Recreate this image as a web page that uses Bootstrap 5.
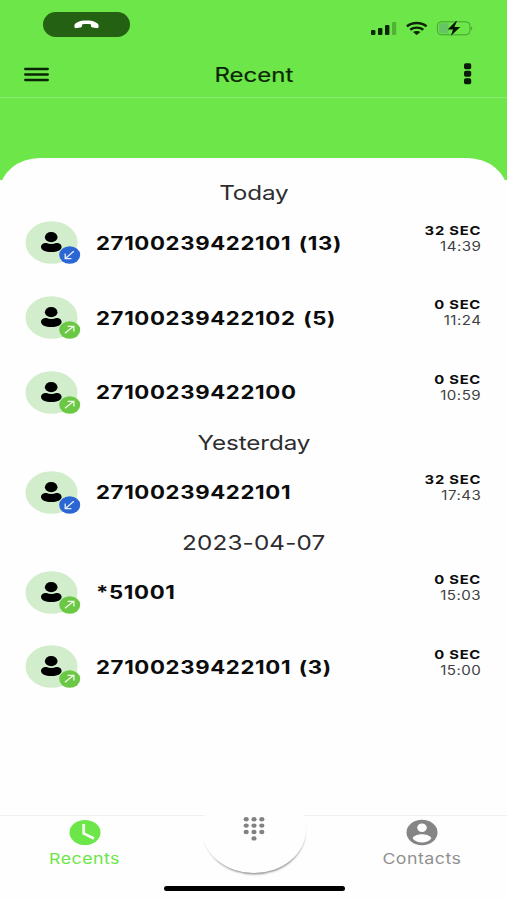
<!DOCTYPE html>
<html lang="en">
<head>
<meta charset="utf-8">
<meta name="viewport" content="width=device-width, initial-scale=1">
<title>Recent</title>
<link href="https://cdn.jsdelivr.net/npm/bootstrap@5.3.0/dist/css/bootstrap.min.css" rel="stylesheet">
<style>
  body { font-family: Inter, "Liberation Sans", sans-serif; background: #fefefe; color: #0c0c0c; line-height: 1; }
  .screen { height: 900px; }
  .hero { height: 180px; background: #6ce648; }
  .statusbar { height: 51px; padding: 12px 34px 0 43px; }
  .call-pill { width: 87px; height: 25px; background: #246113; }
  .status-icons { padding-top: 9px; }
  .titlebar { height: 47px; padding: 0 24px; border-bottom: 1px solid #86ea70; display: grid; grid-template-columns: 1fr auto 1fr; }
  .wide { display: inline-block; transform: scaleX(1.2); white-space: nowrap; }
  .from-start { transform-origin: left center; }
  .from-end { transform-origin: right center; }
  .page-title { font-size: 20px; color: #0b2604; padding-top: 2px; -webkit-text-stroke: .2px; }
  .panel { margin-top: -22px; background: #fefefe; border-radius: 40px 40px 0 0 / 33px 33px 0 0; }
  .day { height: 57px; font-size: 20.2px; letter-spacing: -.1px; color: #2d2d2f; padding-top: 2px; }
  .day.first { height: 63.2px; padding-top: 8px; }
  .day.date { letter-spacing: .15px; }
  .call { height: 43px; padding: 0 26px 0 25px; }
  .call + .call { margin-top: 31.7px; }
  .avatar { width: 56px; height: 43px; margin-right: 15px; }
  .number { font-size: 18.5px; font-weight: 700; letter-spacing: .53px; word-spacing: 1.5px; padding-top: 1px; }
  .meta { padding-top: 2.5px; }
  .secs { font-size: 12.3px; font-weight: 700; letter-spacing: .65px; height: 15px; line-height: 13px; }
  .clock { font-size: 12.6px; letter-spacing: .4px; color: #3f3f41; height: 15px; line-height: 15px; }
  .tabs { height: 85px; border-top: 1px solid #f0f0f0; }
  .tab { width: 170px; padding-top: 3px; color: #909090; font-size: 14.8px; letter-spacing: .4px; }
  .tab-label { margin-top: 5.5px; }
  .tab.on { color: #6ce648; }
  .dial { width: 104px; height: 87px; margin-top: -30px; padding-bottom: 4px; border-radius: 50%; background: #fefefe; box-shadow: .5px 3px 2px -1.5px #999; }
  .dial-cell { width: 167px; }
  .home-bar { width: 181px; height: 5px; background: #000; left: 164px; bottom: 9px; }
</style>
<script src="https://cdn.jsdelivr.net/npm/bootstrap@5.3.0/dist/js/bootstrap.bundle.min.js"></script>
</head>
<body>
<svg width="0" height="0" class="position-absolute" aria-hidden="true">
  <defs>
    <g id="person">
      <ellipse cx="26.5" cy="21.5" rx="26" ry="21.3" fill="#d1edcb"/>
      <ellipse cx="26.2" cy="16.2" rx="6.3" ry="5.1" fill="#000"/>
      <path d="M16 25.9C16 22.8 19.6 21.6 21.6 22C24.3 23.2 28.4 23.2 31.1 22C33.2 21.6 36.6 22.8 36.6 25.9C36.6 29 32.1 31 26.3 31S16 29 16 25.9Z" fill="#000"/>
    </g>
    <g id="incoming">
      <use href="#person"/>
      <ellipse cx="44.7" cy="34" rx="10.5" ry="8.7" fill="#2b66d3"/>
      <path d="M48.8 30.2L40.4 37.4M40.2 32.4V37.6H46.4" fill="none" stroke="#e8effb" stroke-width="1.3"/>
    </g>
    <g id="outgoing">
      <use href="#person"/>
      <ellipse cx="44.7" cy="34" rx="10.5" ry="8.7" fill="#6bc844"/>
      <path d="M39.9 37.3L48.6 30.3M42.6 30.4H48.9V35.4" fill="none" stroke="#f1faed" stroke-width="1.3"/>
    </g>
  </defs>
</svg>

<div class="screen position-relative d-flex flex-column overflow-hidden">
  <header class="hero flex-shrink-0">
    <div class="statusbar d-flex justify-content-between align-items-start">
      <div class="call-pill rounded-pill d-flex align-items-center justify-content-center">
        <svg width="25" height="9" viewBox="0 0 25 9"><path d="M.4 5.6C.4 2.4 6 .4 12.5 .4S24.6 2.4 24.6 5.6V6.6C24.6 8 23.6 8.3 22.4 8.1L18.6 7.4C17.5 7.2 17 6.8 17 5.9V4.5C14.4 3.9 10.6 3.9 8 4.5V5.9C8 6.8 7.5 7.2 6.4 7.4L2.6 8.1C1.4 8.3 .4 8 .4 6.6Z" fill="#fff"/></svg>
      </div>
      <div class="status-icons d-flex">
        <svg width="103" height="16" viewBox="370 21 103 16">
          <g fill="#0b2604">
            <rect x="371" y="30" width="4.4" height="5" rx="1"/><rect x="378" y="28" width="4.4" height="7" rx="1"/><rect x="385" y="25" width="4.4" height="10" rx="1"/>
            <rect x="392" y="22" width="4.2" height="13" rx="1" opacity=".27"/>
            <path d="M416.7 34.9L413 32C415.1 30.5 418.4 30.5 420.5 32Z"/>
          </g>
          <g fill="none" stroke="#0b2604" stroke-width="2.4">
            <path d="M406.9 26.4C412.3 21.8 421.2 21.8 426.6 26.4"/><path d="M410.2 29.8C413.8 26.9 419.7 26.9 423.3 29.8"/>
          </g>
          <rect x="437.4" y="21.8" width="32.6" height="13" rx="4" fill="none" stroke="#45a32e" stroke-width="1"/>
          <path d="M439 26q0-2.8 2.8-2.8H448.5V33.4H441.8Q439 33.4 439 30.6Z" fill="#65c562"/>
          <path d="M471 26.4q2.3 1.9 0 3.8Z" fill="#45a32e"/>
          <path d="M456 21L447.6 29.4H453L450.8 36L460.2 27H454.4L457 21Z" fill="#061502" stroke="#6ce648" stroke-width=".8" paint-order="stroke"/>
        </svg>
      </div>
    </div>
    <div class="titlebar align-items-center">
      <svg width="25" height="15" viewBox="0 0 25 15"><path d="M1.2 2H23.8M1.2 7.5H23.8M1.2 13H23.8" stroke="#0b2604" stroke-width="2.3" stroke-linecap="round"/></svg>
      <span class="wide page-title">Recent</span>
      <svg class="ms-auto me-2" width="15" height="22" viewBox="0 0 15 22"><g fill="#0a1a05"><rect x="4" y=".2" width="7.2" height="6" rx="1.8"/><rect x="4" y="7.7" width="7.2" height="6" rx="1.8"/><rect x="4" y="15.2" width="7.2" height="6" rx="1.8"/></g></svg>
    </div>
  </header>

  <main class="panel flex-grow-1">
    <div class="day first d-flex align-items-center justify-content-center"><span class="wide">Today</span></div>
    <div class="call d-flex align-items-center">
      <svg class="avatar" viewBox="0 0 56 43"><use href="#incoming"/></svg>
      <span class="wide from-start number">27100239422101 (13)</span>
      <div class="meta ms-auto align-self-start d-flex flex-column align-items-end"><span class="wide from-end secs">32 SEC</span><span class="wide from-end clock">14:39</span></div>
    </div>
    <div class="call d-flex align-items-center">
      <svg class="avatar" viewBox="0 0 56 43"><use href="#outgoing"/></svg>
      <span class="wide from-start number">27100239422102 (5)</span>
      <div class="meta ms-auto align-self-start d-flex flex-column align-items-end"><span class="wide from-end secs">0 SEC</span><span class="wide from-end clock">11:24</span></div>
    </div>
    <div class="call d-flex align-items-center">
      <svg class="avatar" viewBox="0 0 56 43"><use href="#outgoing"/></svg>
      <span class="wide from-start number">27100239422100</span>
      <div class="meta ms-auto align-self-start d-flex flex-column align-items-end"><span class="wide from-end secs">0 SEC</span><span class="wide from-end clock">10:59</span></div>
    </div>
    <div class="day d-flex align-items-center justify-content-center"><span class="wide">Yesterday</span></div>
    <div class="call d-flex align-items-center">
      <svg class="avatar" viewBox="0 0 56 43"><use href="#incoming"/></svg>
      <span class="wide from-start number">27100239422101</span>
      <div class="meta ms-auto align-self-start d-flex flex-column align-items-end"><span class="wide from-end secs">32 SEC</span><span class="wide from-end clock">17:43</span></div>
    </div>
    <div class="day date d-flex align-items-center justify-content-center"><span class="wide">2023-04-07</span></div>
    <div class="call d-flex align-items-center">
      <svg class="avatar" viewBox="0 0 56 43"><use href="#outgoing"/></svg>
      <span class="wide from-start number">*51001</span>
      <div class="meta ms-auto align-self-start d-flex flex-column align-items-end"><span class="wide from-end secs">0 SEC</span><span class="wide from-end clock">15:03</span></div>
    </div>
    <div class="call d-flex align-items-center">
      <svg class="avatar" viewBox="0 0 56 43"><use href="#outgoing"/></svg>
      <span class="wide from-start number">27100239422101 (3)</span>
      <div class="meta ms-auto align-self-start d-flex flex-column align-items-end"><span class="wide from-end secs">0 SEC</span><span class="wide from-end clock">15:00</span></div>
    </div>
  </main>

  <nav class="tabs flex-shrink-0 d-flex justify-content-between align-items-start">
    <div class="tab on d-flex flex-column align-items-center">
      <svg width="32" height="27" viewBox="0 0 32 27"><ellipse cx="16" cy="13.5" rx="15.5" ry="12.6" fill="#6ce648"/><path d="M14.7 5V14.4L25 19.6" fill="none" stroke="#f3fdf0" stroke-width="2.8"/></svg>
      <span class="wide tab-label">Recents</span>
    </div>
    <div class="dial-cell d-flex justify-content-center">
      <div class="dial d-flex align-items-center justify-content-center">
        <svg width="22" height="26" viewBox="0 0 22 26"><g fill="#828282">
          <ellipse cx="3.2" cy="4.2" rx="2.6" ry="2.2"/><ellipse cx="11" cy="4.2" rx="2.6" ry="2.2"/><ellipse cx="18.8" cy="4.2" rx="2.6" ry="2.2"/>
          <ellipse cx="3.2" cy="10.6" rx="2.6" ry="2.2"/><ellipse cx="11" cy="10.6" rx="2.6" ry="2.2"/><ellipse cx="18.8" cy="10.6" rx="2.6" ry="2.2"/>
          <ellipse cx="3.2" cy="17" rx="2.6" ry="2.2"/><ellipse cx="11" cy="17" rx="2.6" ry="2.2"/><ellipse cx="18.8" cy="17" rx="2.6" ry="2.2"/>
          <ellipse cx="11" cy="23.4" rx="2.6" ry="2.2"/></g></svg>
      </div>
    </div>
    <div class="tab d-flex flex-column align-items-center">
      <svg width="32" height="27" viewBox="0 0 32 27"><ellipse cx="16" cy="13.5" rx="15.5" ry="12.8" fill="#858585"/><ellipse cx="16" cy="8.7" rx="4.8" ry="4.2" fill="#fefefe"/><path d="M6.7 19.4C6.9 16.6 12.8 15.2 16 15.2S25.1 16.6 25.3 19.4C23.2 22 19.8 23.4 16 23.4S8.8 22 6.7 19.4Z" fill="#fefefe"/></svg>
      <span class="wide tab-label">Contacts</span>
    </div>
  </nav>
  <div class="home-bar rounded-pill position-absolute"></div>
</div>
</body>
</html>
